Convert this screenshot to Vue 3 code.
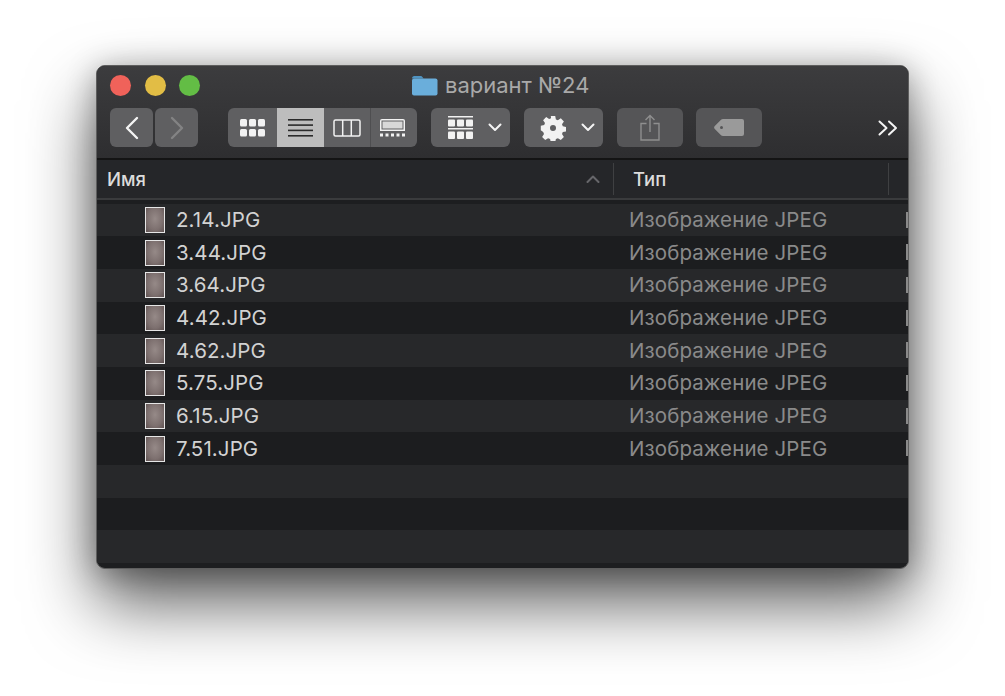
<script setup>
const files = [
  "2.14.JPG",
  "3.44.JPG",
  "3.64.JPG",
  "4.42.JPG",
  "4.62.JPG",
  "5.75.JPG",
  "6.15.JPG",
  "7.51.JPG",
];
const emptyRows = 3;
</script>

<template>
  <div class="page">
    <div class="window">
      <div class="top">
        <div class="titlebar">
          <div class="lights">
            <span class="light red"></span>
            <span class="light yellow"></span>
            <span class="light green"></span>
          </div>
          <div class="title">
            <svg class="folder" width="27" height="21" viewBox="0 0 27 21">
              <path d="M1 3.5C1 2 2 1 3.2 1h6.2c1 0 1.6.4 2.2 1.2L12.6 3.5H1z" fill="#4f93c0" />
              <rect x="1" y="3.5" width="25.5" height="17" rx="2" fill="#6aaedb" />
            </svg>
            <span>вариант №24</span>
          </div>
        </div>

        <div class="toolbar">
          <div class="nav">
            <button class="btn nav-btn">
              <svg width="16" height="24" viewBox="0 0 16 24"><path d="M13 2L3 12l10 10" class="line white" /></svg>
            </button>
            <button class="btn nav-btn">
              <svg width="16" height="24" viewBox="0 0 16 24"><path d="M3 2l10 10L3 22" class="line dim" /></svg>
            </button>
          </div>

          <div class="views">
            <button class="view v1">
              <svg width="25" height="18" viewBox="0 0 25 18" fill="#f2f2f2">
                <rect x="0" y="0" width="7" height="7.5" rx="1.5" />
                <rect x="9" y="0" width="7" height="7.5" rx="1.5" />
                <rect x="18" y="0" width="7" height="7.5" rx="1.5" />
                <rect x="0" y="10" width="7" height="7.5" rx="1.5" />
                <rect x="9" y="10" width="7" height="7.5" rx="1.5" />
                <rect x="18" y="10" width="7" height="7.5" rx="1.5" />
              </svg>
            </button>
            <button class="view v2 active">
              <svg width="25" height="18" viewBox="0 0 25 18" fill="#2b2b2b">
                <rect y="0" width="25" height="1.6" />
                <rect y="5.3" width="25" height="1.6" />
                <rect y="10.6" width="25" height="1.6" />
                <rect y="16" width="25" height="1.6" />
              </svg>
            </button>
            <button class="view v3">
              <svg width="28" height="18" viewBox="0 0 28 18" fill="none" stroke="#f2f2f2" stroke-width="1.5">
                <rect x="1" y="1" width="26" height="16" rx="1.5" />
                <path d="M9.7 1v16M18.3 1v16" />
              </svg>
            </button>
            <button class="view v4">
              <svg width="25" height="18" viewBox="0 0 25 18" fill="#f2f2f2">
                <path d="M2 0h21a2 2 0 0 1 2 2v10H0V2a2 2 0 0 1 2-2z" />
                <rect x="1.5" y="1.5" width="22" height="9" fill="#5f5f61" />
                <rect x="2.5" y="2.5" width="20" height="7" fill="#d8d8d8" />
                <rect x="0" y="14.5" width="3" height="3" />
                <rect x="5.5" y="14.5" width="3" height="3" />
                <rect x="11" y="14.5" width="3" height="3" />
                <rect x="16.5" y="14.5" width="3" height="3" />
                <rect x="22" y="14.5" width="3" height="3" />
              </svg>
            </button>
          </div>

          <button class="btn drop group-btn">
            <svg width="25" height="24" viewBox="0 0 25 24" fill="#f2f2f2">
              <rect y="0" width="25" height="1.5" />
              <rect y="3.5" width="7" height="7" rx="1" />
              <rect x="9" y="3.5" width="7" height="7" rx="1" />
              <rect x="18" y="3.5" width="7" height="7" rx="1" />
              <rect y="12" width="25" height="1.5" />
              <rect y="15.5" width="7" height="7.5" rx="1" />
              <rect x="9" y="15.5" width="7" height="7.5" rx="1" />
              <rect x="18" y="15.5" width="7" height="7.5" rx="1" />
            </svg>
            <svg class="chev" width="14" height="9" viewBox="0 0 14 9"><path d="M1.5 1.5L7 7l5.5-5.5" class="line white thin" /></svg>
          </button>

          <button class="btn drop action-btn">
            <svg width="26" height="26" viewBox="0 0 26 26">
              <path
                fill="#f2f2f2"
                fill-rule="evenodd"
                d="M10.8 1h4.4l.7 3.4 2 .8 2.9-1.9 3.1 3.1-1.9 2.9.8 2 3.4.7v4.4l-3.4.7-.8 2 1.9 2.9-3.1 3.1-2.9-1.9-2 .8-.7 3.4h-4.4l-.7-3.4-2-.8-2.9 1.9-3.1-3.1 1.9-2.9-.8-2L.8 15.2v-4.4l3.4-.7.8-2L3.1 5.2l3.1-3.1 2.9 1.9 2-.8zM13 10a3 3 0 1 0 0 6 3 3 0 0 0 0-6z"
              />
            </svg>
            <svg class="chev" width="14" height="9" viewBox="0 0 14 9"><path d="M1.5 1.5L7 7l5.5-5.5" class="line white thin" /></svg>
          </button>

          <button class="btn off share-btn">
            <svg width="20" height="27" viewBox="0 0 20 27" fill="none" stroke="#8f8f8f" stroke-width="1.4">
              <path d="M6.5 9.5H1v16.5h18V9.5h-5.5" />
              <path d="M10 18V1.5M5.5 6L10 1.5 14.5 6" />
            </svg>
          </button>

          <button class="btn off tag-btn">
            <svg width="30" height="17" viewBox="0 0 30 17">
              <path
                fill="#9a9a9a"
                fill-rule="evenodd"
                d="M9 0h19a2 2 0 0 1 2 2v13a2 2 0 0 1-2 2H9a3 3 0 0 1-2-.8L.8 10a2.2 2.2 0 0 1 0-3L7 .8A3 3 0 0 1 9 0zM7.5 7a1.5 1.5 0 1 0 0 3 1.5 1.5 0 0 0 0-3z"
              />
            </svg>
          </button>

          <svg class="more" width="20" height="16" viewBox="0 0 20 16">
            <path d="M1.5 1.5L8.5 8l-7 6.5M11 1.5L18 8l-7 6.5" class="line white thin" />
          </svg>
        </div>
      </div>

      <div class="header">
        <div class="col-name">
          <span class="head-label">Имя</span>
          <svg width="14" height="8" viewBox="0 0 14 8"><path d="M1.5 7L7 1.5 12.5 7" class="line caret" /></svg>
        </div>
        <div class="col-type">
          <span class="head-label">Тип</span>
        </div>
      </div>

      <div class="list">
        <div v-for="file in files" :key="file" class="row">
          <span class="thumb"></span>
          <span class="fname">{{ file }}</span>
          <span class="ftype">Изображение JPEG</span>
          <span class="cut"></span>
        </div>
        <div v-for="n in emptyRows" :key="n" class="row"></div>
      </div>
    </div>
  </div>
</template>

<style scoped>
.page {
  width: 1005px;
  height: 696px;
  box-sizing: border-box;
  padding: 65px 96px 0;
  overflow: hidden;
  background: #fff;
  font-family: Inter, "Liberation Sans", sans-serif;
}

.window {
  width: 813px;
  height: 504px;
  box-sizing: border-box;
  border: 1px solid #5e5e5e;
  border-radius: 9px;
  overflow: hidden;
  background: #1d1e20;
  display: flex;
  flex-direction: column;
  box-shadow: 0 34px 68px rgba(0, 0, 0, 0.64), 0 4px 30px rgba(0, 0, 0, 0.3);
}

.top {
  height: 94px;
  box-sizing: border-box;
  background: linear-gradient(#3c3c3e, #2e2e30);
  border-bottom: 2px solid #141414;
}

.titlebar {
  height: 38px;
  display: flex;
  align-items: center;
  padding-left: 13px;
}

.lights {
  display: flex;
  gap: 13.5px;
}

.light {
  width: 21px;
  height: 21px;
  border-radius: 50%;
}
.red {
  background: #f0625a;
}
.yellow {
  background: #e2bd45;
}
.green {
  background: #63bd45;
}

.title {
  margin-left: 211px;
  display: flex;
  align-items: center;
  gap: 7px;
  color: #a9a9a9;
  font-size: 22px;
  line-height: 26px;
  white-space: nowrap;
}

.toolbar {
  display: flex;
  align-items: center;
  padding-left: 13px;
  margin-top: 4px;
  height: 39px;
}

button {
  border: 0;
  padding: 0;
  margin: 0;
  display: flex;
  align-items: center;
  justify-content: center;
  height: 39px;
  font: inherit;
}

.btn {
  background: #5f5f61;
  border-radius: 6px;
}

.nav {
  display: flex;
  gap: 2px;
  margin-right: 30px;
}
.nav-btn {
  width: 43px;
}

.views {
  display: flex;
  border-radius: 6px;
  overflow: hidden;
  background: #5f5f61;
  margin-right: 14px;
}
.view {
  background: transparent;
}
.v1 {
  width: 49px;
}
.v2 {
  width: 47px;
}
.v3 {
  width: 46px;
}
.v4 {
  width: 47px;
  box-sizing: border-box;
  padding-right: 4px;
  border-left: 1px solid #4e4e50;
}
.active {
  background: #bdbdbd;
}

.drop {
  width: 79px;
  box-sizing: border-box;
  padding-left: 8px;
  gap: 15px;
  margin-right: 14px;
}

.off {
  width: 66px;
  background: #555557;
}
.share-btn {
  margin-right: 13px;
}

.more {
  margin-left: auto;
  margin-right: 10px;
}

.line {
  fill: none;
  stroke-width: 2.4;
  stroke-linecap: round;
  stroke-linejoin: round;
}
.white {
  stroke: #f4f4f4;
}
.dim {
  stroke: #838384;
}
.thin {
  stroke-width: 2;
}
.caret {
  stroke: #66666a;
  stroke-width: 2;
}

.header {
  height: 40px;
  flex: none;
  display: flex;
  background: #252629;
  border-bottom: 2px solid #3a3b3d;
  box-sizing: border-box;
  color: #dcdcdc;
}
.col-name {
  width: 516px;
  box-sizing: border-box;
  padding: 0 13px 0 10px;
  display: flex;
  align-items: center;
  justify-content: space-between;
}
.col-type {
  width: 276px;
  box-sizing: border-box;
  padding-left: 19px;
  display: flex;
  align-items: center;
  border-left: 1px solid #3f4042;
  border-right: 1px solid #3f4042;
  margin: 3px 0;
}
.head-label {
  font-size: 18.5px;
  font-weight: 500;
}

.list {
  flex: 1;
  padding-top: 3.5px;
  min-height: 0;
}

.row {
  height: 32.7px;
  display: flex;
  align-items: center;
  background: #27282a;
  position: relative;
}
.row:nth-child(even) {
  background: #1c1d1f;
}

.thumb {
  width: 20px;
  height: 26px;
  margin-left: 48px;
  box-sizing: border-box;
  border: 1.5px solid #e6e6e6;
  background: radial-gradient(ellipse at 50% 45%, #968a88, #7d706f 60%, #5f5252);
}

.fname {
  width: 453px;
  margin-left: 11px;
  color: #d2d2d2;
  font-size: 20.5px;
  letter-spacing: 0.1px;
  line-height: 24px;
}

.ftype {
  color: #8a8a8a;
  font-size: 20.5px;
  letter-spacing: 0.1px;
  line-height: 24px;
  white-space: nowrap;
}

.cut {
  position: absolute;
  right: 0;
  top: 8px;
  width: 2px;
  height: 16px;
  background: #8a8a8a;
}
</style>

<style>
body {
  background: #fff;
}
</style>
